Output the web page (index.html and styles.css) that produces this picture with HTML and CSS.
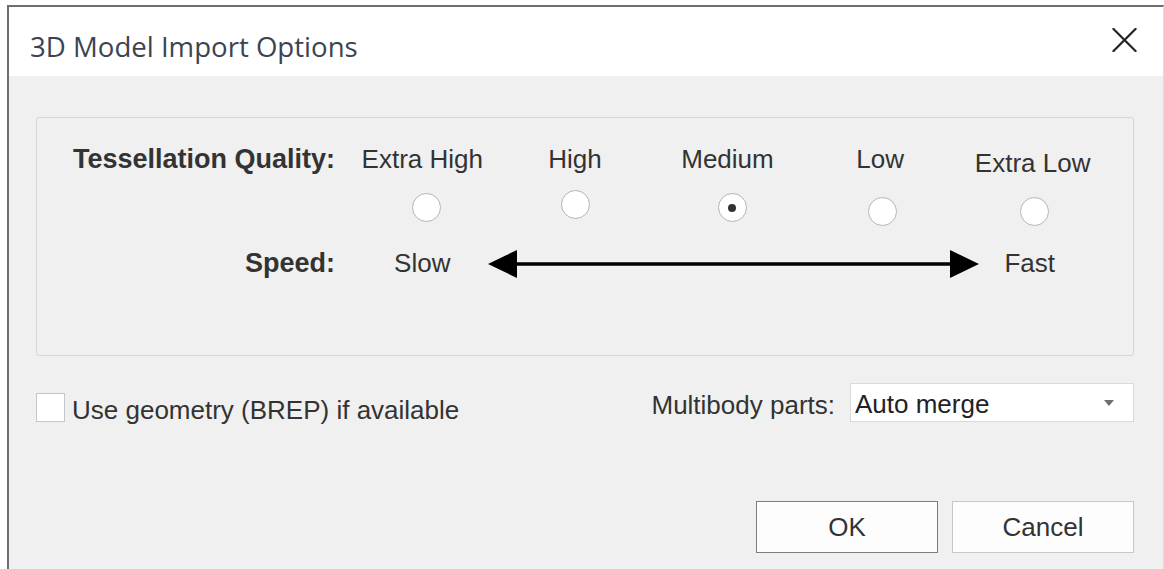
FILE: index.html
```html
<!DOCTYPE html>
<html lang="en">
<head>
<meta charset="utf-8">
<title>3D Model Import Options</title>
<link rel="stylesheet" href="styles.css">
</head>
<body>
<div class="window">
  <header class="titlebar">
    <h1 class="title">3D Model Import Options</h1>
    <button class="close" type="button" aria-label="Close">
      <svg width="25" height="24" viewBox="0 0 25 24">
        <path d="M1.5 1 L23.5 23 M23.5 1 L1.5 23" stroke="#222" stroke-width="2.2" fill="none" stroke-linecap="square"/>
      </svg>
    </button>
  </header>

  <main class="content">
    <section class="group">
      <div class="quality-grid">
        <div class="field-label">Tessellation Quality:</div>
        <div class="opt-label">Extra High</div>
        <div class="opt-label">High</div>
        <div class="opt-label">Medium</div>
        <div class="opt-label">Low</div>
        <div class="opt-label opt-label--low">Extra Low</div>

        <div class="spacer"></div>
        <span class="radio radio--xhigh"></span>
        <span class="radio radio--high"></span>
        <span class="radio radio--medium radio--checked"></span>
        <span class="radio radio--low"></span>
        <span class="radio radio--xlow"></span>

        <div class="field-label">Speed:</div>
        <div class="speed-end">Slow</div>
        <div class="speed-arrow">
          <svg width="491" height="28" viewBox="0 0 491 28">
            <line x1="28" y1="14" x2="463" y2="14" stroke="#000" stroke-width="3.5"/>
            <polygon points="0,14 29,0 29,28" fill="#000"/>
            <polygon points="491,14 462,0 462,28" fill="#000"/>
          </svg>
        </div>
        <div class="speed-end speed-end--fast">Fast</div>
      </div>
    </section>

    <div class="options">
      <label class="check">
        <span class="check-box"></span>
        <span class="check-text">Use geometry (BREP) if available</span>
      </label>
      <div class="multibody">
        <span class="multibody-label">Multibody parts:</span>
        <div class="select">
          <span class="select-value">Auto merge</span>
          <span class="select-caret"></span>
        </div>
      </div>
    </div>

    <div class="actions">
      <button class="btn btn--default" type="button">OK</button>
      <button class="btn" type="button">Cancel</button>
    </div>
  </main>
</div>
</body>
</html>
```

FILE: styles.css
```css
html, body {
  margin: 0;
  padding: 0;
  background: #ffffff;
  height: 100%;
  overflow: hidden;
}

body {
  font-family: "Liberation Sans", Arial, sans-serif;
  font-size: 26px;
  color: #333333;
}

.window {
  margin: 5px 0 0 7px;
  border-top: 2px solid #6e6e6e;
  border-left: 2px solid #6e6e6e;
  border-right: 1px solid #dcdcdc;
  height: calc(100% - 7px);
  background: #f0f0f0;
  display: flex;
  flex-direction: column;
}

/* Title bar */
.titlebar {
  height: 69px;
  flex: none;
  background: #ffffff;
  display: flex;
  justify-content: space-between;
  align-items: flex-start;
  padding: 0 26px 0 21px;
  box-sizing: border-box;
}

.title {
  margin: 23px 0 0 0;
  font-family: "Open Sans", "Noto Sans", sans-serif;
  font-weight: 400;
  font-size: 27.6px;
  line-height: 32px;
  color: #3b4452;
}

.close {
  margin-top: 21px;
  padding: 0;
  border: 0;
  background: transparent;
  width: 25px;
  height: 24px;
  display: block;
}

.close svg {
  display: block;
}

/* Body */
.content {
  flex: 1;
  padding: 41px 29px 0 27px;
}

.group {
  border: 1px solid #d6d6d6;
  border-radius: 3px;
  padding: 26px 0 77px 0;
}

.quality-grid {
  display: grid;
  grid-template-columns: 309px repeat(5, 152.6px);
  grid-template-rows: 30px 74px 30px;
  line-height: 30px;
}

.field-label {
  font-weight: 700;
  font-size: 27px;
  text-align: right;
  padding-right: 11px;
  white-space: nowrap;
}

.opt-label {
  justify-self: center;
  white-space: nowrap;
}

.opt-label--low {
  margin-top: 4px;
}

/* Radio buttons */
.radio {
  justify-self: center;
  align-self: start;
  width: 27px;
  height: 27px;
  margin-top: 19px;
  border: 1px solid #b4b4b4;
  border-radius: 50%;
  background: #ffffff;
  display: flex;
  align-items: center;
  justify-content: center;
}

.radio--xhigh { margin-left: 9px; }
.radio--high { margin-top: 16px; margin-left: 2px; }
.radio--medium { margin-left: 10px; }
.radio--low { margin-top: 23px; margin-left: 4px; }
.radio--xlow { margin-top: 23px; margin-left: 3px; }

.radio--checked::after {
  content: "";
  width: 8px;
  height: 8px;
  border-radius: 50%;
  background: #333333;
}

/* Speed scale */
.speed-end {
  justify-self: center;
}

.speed-end--fast {
  margin-right: 6px;
}

.speed-arrow {
  grid-column: 3 / 6;
  align-self: center;
  margin: 2px -22.6px 0 -10.6px;
  height: 28px;
}

.speed-arrow svg {
  display: block;
}

/* Options row */
.options {
  margin-top: 27px;
  display: flex;
  justify-content: space-between;
  align-items: flex-start;
  line-height: 30px;
}

.check {
  margin-top: 10px;
  display: flex;
  align-items: flex-start;
  gap: 7px;
}

.check-box {
  width: 27px;
  height: 27px;
  border: 1px solid #c6c6c6;
  background: #ffffff;
}

.check-text {
  margin-top: 2px;
}

.multibody {
  display: flex;
  align-items: flex-start;
  gap: 15px;
}

.multibody-label {
  margin-top: 7px;
}

.select {
  width: 284px;
  height: 39px;
  box-sizing: border-box;
  border: 1px solid #dadada;
  background: #ffffff;
  padding: 3px 19px 0 4px;
  display: flex;
  align-items: center;
  justify-content: space-between;
  color: #222222;
}

.select-caret {
  width: 0;
  height: 0;
  border-left: 5px solid transparent;
  border-right: 5px solid transparent;
  border-top: 6px solid #6e6e6e;
  margin-top: -3px;
}

/* Dialog buttons */
.actions {
  margin-top: 76px;
  display: flex;
  justify-content: flex-end;
  gap: 14px;
}

.btn {
  width: 182px;
  height: 52px;
  box-sizing: border-box;
  border: 1px solid #c8c8c8;
  background: #fdfdfd;
  font-family: "Liberation Sans", Arial, sans-serif;
  font-size: 26px;
  line-height: 30px;
  color: #333333;
  padding: 0;
}

.btn--default {
  border-color: #7d7d7d;
}
```
